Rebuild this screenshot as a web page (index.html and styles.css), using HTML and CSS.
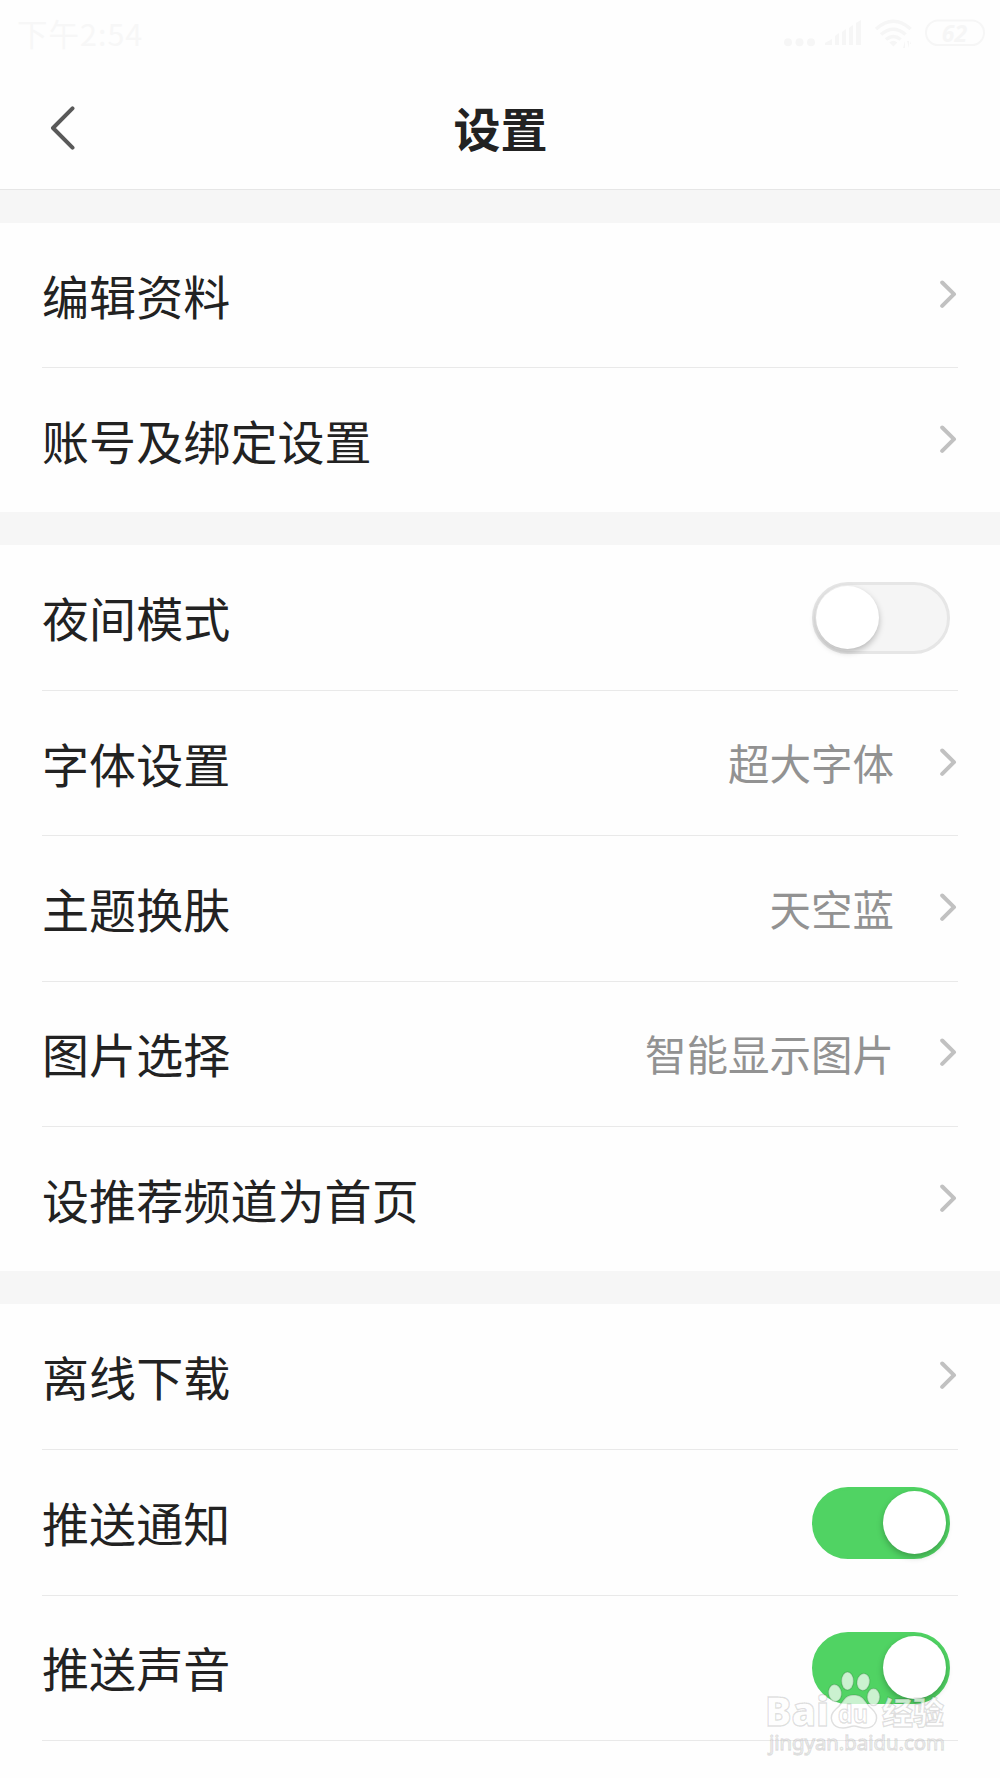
FILE: index.html
```html
<!DOCTYPE html>
<html lang="zh-CN">
<head>
    <meta charset="UTF-8">
    <title>设置</title>
    <link rel="stylesheet" href="styles.css">
</head>
<body>
    <svg width="0" height="0" class="defs">
        <symbol id="arrow" viewBox="0 0 18 30">
            <path d="M2.200 3.500L14 15.200L2.200 26.900" fill="none" stroke="#c1c1c1" stroke-width="4" stroke-linecap="round" stroke-linejoin="round"/>
        </symbol>
    </svg>
    <div class="status-bar">
        <span class="time">下午2:54</span>
        <svg class="status-icons" width="206" height="34" viewBox="0 0 206 34">
            <g fill="#f6f6f6">
                <circle cx="9" cy="25.300" r="4"/>
                <circle cx="20.500" cy="25.300" r="4"/>
                <circle cx="32" cy="25.300" r="4"/>
                <path d="M46 28v-2l7-4v6zM56 19l4-3v12h-4zM63 15l4-3v16h-4zM70 11l4-3v20h-4zM77 6l5-3v25h-5z"/>
                <path d="M114.300 29.500l-4-4q4-3.500 8 0z"/>
                <path d="M128 24h2v7zM126 24v7h-2zM132 27h-1v-3z"/>
            </g>
            <g fill="none" stroke="#f6f6f6" stroke-width="3.500">
                <path d="M97 12q17.300-15.500 34.600 0M102 17.500q12.300-10.500 24.600 0M107 22.500q7.300-6 14.600 0"/>
                <rect x="147" y="3.500" width="58" height="24.500" rx="12.200" stroke-width="2"/>
            </g>
            <text x="175.500" y="24.500" text-anchor="middle" class="battery">62</text>
        </svg>
    </div>
    <header class="header">
        <svg class="back" width="26" height="46" viewBox="0 0 26 46">
            <path d="M23.500 3.300L4 23L23.500 42.700" fill="none" stroke="#595959" stroke-width="4" stroke-linecap="round" stroke-linejoin="round"/>
        </svg>
        <h1>设置</h1>
    </header>

    <div class="group account">
        <div class="row"><span class="label">编辑资料</span><svg class="arrow"><use href="#arrow"/></svg></div>
        <div class="row"><span class="label">账号及绑定设置</span><svg class="arrow"><use href="#arrow"/></svg></div>
    </div>

    <div class="group">
        <div class="row"><span class="label">夜间模式</span><div class="switch"></div></div>
        <div class="row"><span class="label">字体设置</span><span class="value">超大字体</span><svg class="arrow"><use href="#arrow"/></svg></div>
        <div class="row"><span class="label">主题换肤</span><span class="value">天空蓝</span><svg class="arrow"><use href="#arrow"/></svg></div>
        <div class="row"><span class="label">图片选择</span><span class="value">智能显示图片</span><svg class="arrow"><use href="#arrow"/></svg></div>
        <div class="row"><span class="label">设推荐频道为首页</span><svg class="arrow"><use href="#arrow"/></svg></div>
    </div>

    <div class="group last">
        <div class="row"><span class="label">离线下载</span><svg class="arrow"><use href="#arrow"/></svg></div>
        <div class="row"><span class="label">推送通知</span><div class="switch on"></div></div>
        <div class="row"><span class="label">推送声音</span><div class="switch on"></div></div>
        <div class="row cut"><div class="switch on"></div></div>
    </div>

    <svg class="watermark" width="200" height="100" viewBox="0 0 200 100">
        <g class="mark">
            <ellipse cx="75" cy="33" rx="6.500" ry="8.500" transform="rotate(-8 75 33)"/>
            <ellipse cx="87.500" cy="21" rx="6" ry="9"/>
            <ellipse cx="103.300" cy="22" rx="6.300" ry="8.500" transform="rotate(10 103.300 22)"/>
            <ellipse cx="113.500" cy="37" rx="6.300" ry="8.500"/>
            <path d="M94 35C83 35 84 43 76 49C67 57 72 68 83 68C88 68 90 66 94 66C98 66 100 68 105 68C117 68 120 56 112 49C105 44 105 35 94 35Z"/>
            <text x="5" y="66" class="brand" textLength="64" lengthAdjust="spacingAndGlyphs">Bai</text>
            <text x="78" y="63" class="du" textLength="30" lengthAdjust="spacingAndGlyphs">du</text>
            <text x="122" y="64" class="brand-cn">经验</text>
            <text x="9" y="90" class="site" textLength="176" lengthAdjust="spacingAndGlyphs">jingyan.baidu.com</text>
        </g>
    </svg>
</body>
</html>
```
FILE: styles.css
```css
html, body {
    margin: 0;
    padding: 0;
    height: 1778px;
    overflow: hidden;
}

body {
    position: relative;
    background-color: #f6f6f6;
    color: #222;
    font-family: "Noto Sans CJK SC", sans-serif;
}

.defs {
    position: absolute;
}

.status-bar {
    display: flex;
    justify-content: space-between;
    box-sizing: border-box;
    height: 66px;
    padding: 17px 15px 0 17px;
    background-color: #fefefe;
    color: #f7f7f7;
}

.time {
    font-size: 30.500px;
    line-height: 32px;
    letter-spacing: 1px;
}

.battery {
    font: italic bold 23px "Noto Sans", sans-serif;
    fill: #f6f6f6;
}

.header {
    display: grid;
    grid-template-columns: 1fr auto 1fr;
    align-items: center;
    box-sizing: border-box;
    height: 124px;
    padding: 0 48px 0 49px;
    background-color: #fefefe;
    border-bottom: 1px solid #e6e6e6;
}

h1 {
    margin: 0 0 1px;
    font-size: 47px;
    line-height: 60px;
    font-weight: 700;
}

.group {
    margin-top: 33px;
    padding: 0 42px;
    background-color: #fefefe;
}

.row {
    display: flex;
    align-items: center;
    box-sizing: border-box;
    height: 145.300px;
}

.account .row {
    height: 144.450px;
}

.row + .row {
    border-top: 1px solid #e9e9e9;
}

.last {
    margin-top: 32.600px;
}

.last .cut {
    align-items: flex-start;
    height: 39px;
    padding-top: 36px;
    overflow: hidden;
}

.label {
    flex: 1;
    margin-bottom: 1px;
    font-size: 47px;
    line-height: 60px;
    letter-spacing: 0.100px;
}

.value {
    margin-bottom: 2px;
    color: #929292;
    font-size: 41.500px;
    line-height: 60px;
}

.arrow {
    width: 18px;
    height: 30px;
    margin: 0 0 3px 46px;
}

.switch {
    box-sizing: border-box;
    flex: none;
    width: 138px;
    height: 72px;
    margin: 1px 8.500px 0 auto;
    padding: 1px;
    border: 3px solid #e6e6e6;
    border-radius: 36px;
    background-color: #f5f5f5;
}

.switch::before {
    content: "";
    display: block;
    width: 63px;
    height: 63px;
    border-radius: 50%;
    background-color: #fff;
    box-shadow: 0 3px 6px rgba(0, 0, 0, 0.25);
}

.switch.on {
    border-color: #50d363;
    background-color: #50d363;
}

.switch.on::before {
    margin-left: auto;
}

.cut .switch {
    opacity: 0.6;
}

/* sits over the last rows */
.watermark {
    position: absolute;
    left: 760px;
    top: 1660px;
}

.mark {
    fill: rgba(255, 255, 255, 0.7);
    stroke: rgba(0, 0, 0, 0.12);
    stroke-width: 1.500px;
}

.brand {
    font: 800 40px "Open Sans", sans-serif;
}

.du {
    font: bold 25px "Open Sans", sans-serif;
}

.brand-cn {
    font: 900 31px "Noto Sans CJK SC", sans-serif;
}

.site {
    font: 20px "Noto Sans", sans-serif;
}
```
